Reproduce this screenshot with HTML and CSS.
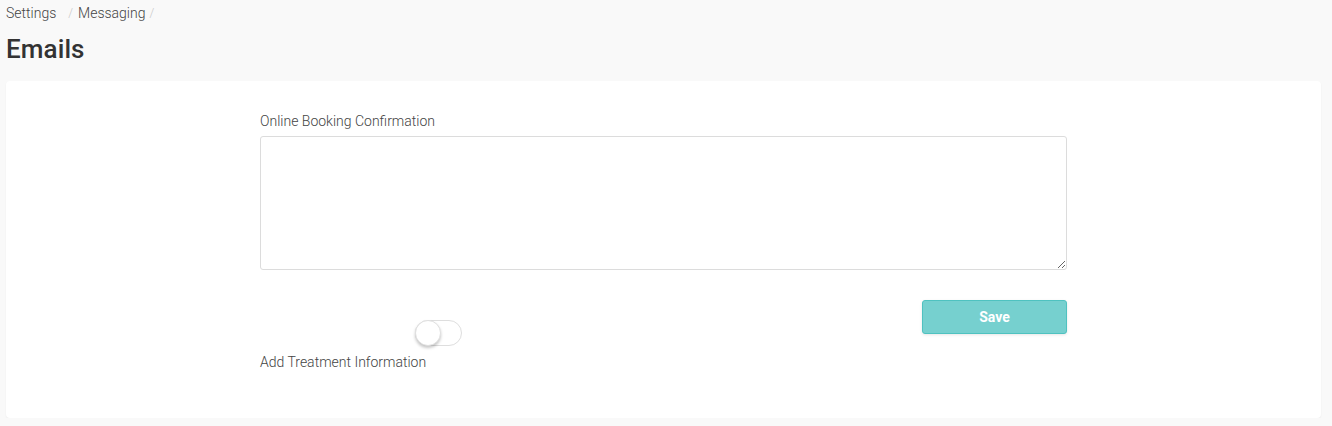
FILE: index.html
```html
<!DOCTYPE html>
<html>
<head>
<meta charset="utf-8">
<link rel="stylesheet" href="styles.css">
</head>
<body>
<div class="page">
  <nav class="crumbs">
    <span class="crumb">Settings</span>
    <span class="sep sep-first">/</span>
    <span class="crumb">Messaging</span>
    <span class="sep">/</span>
  </nav>
  <h1 class="title">Emails</h1>
  <section class="card">
    <div class="column">
      <label class="field-label">Online Booking Confirmation</label>
      <textarea class="field-textarea"></textarea>
      <div class="actions">
        <div class="toggle-group">
          <div class="toggle-row">
            <span class="toggle"><span class="knob"></span></span>
          </div>
          <span class="toggle-label">Add Treatment Information</span>
        </div>
        <button class="save">Save</button>
      </div>
    </div>
  </section>
</div>
</body>
</html>
```
FILE: styles.css
```css
* { box-sizing: border-box; }
html, body {
  margin: 0;
  padding: 0;
  background: #f9f9f9;
  font-family: Roboto, "Liberation Sans", sans-serif;
  color: #555;
}
.page {
  padding: 0 11px 0 6px;
}
.crumbs {
  display: flex;
  align-items: center;
  height: 26px;
  font-size: 14px;
  font-weight: 300;
  line-height: 26px;
  color: #444;
}
.crumb { color: #444; }
.sep {
  color: #c8c8c8;
  font-size: 12px;
  margin: 0 4px 0 4px;
}
.sep-first { margin-left: 12px; margin-right: 5px; }
.title {
  margin: 8px 0 0 0;
  font-size: 26px;
  font-weight: 500;
  letter-spacing: 0.1px;
  line-height: 30px;
  color: #333;
  height: 47px;
}
.card {
  background: #fff;
  border-radius: 4px;
  box-shadow: 0 1px 2px rgba(0,0,0,0.06);
  height: 337px;
  padding-top: 31px;
}
.column {
  width: 807px;
  margin: 0 auto;
  display: flex;
  flex-direction: column;
}
.field-label {
  font-size: 14px;
  font-weight: 300;
  line-height: 18px;
  color: #444;
  margin-bottom: 6px;
}
.field-textarea {
  width: 807px;
  height: 134px;
  border: 1px solid #dcdcdc;
  border-radius: 3px;
  padding: 6px 10px;
  font-family: inherit;
  font-size: 13px;
  resize: vertical;
  outline: none;
  background: #fff;
}
.actions {
  display: flex;
  justify-content: space-between;
  align-items: flex-start;
  margin-top: 30px;
}
.toggle-group {
  display: flex;
  flex-direction: column;
}
.toggle-row {
  padding-left: 155px;
  padding-top: 20px;
  height: 53px;
}
.toggle {
  display: block;
  position: relative;
  width: 47px;
  height: 26px;
  border: 1px solid #dedede;
  border-radius: 13px;
  background: #fff;
}
.knob {
  position: absolute;
  left: -1px;
  top: -1px;
  width: 26px;
  height: 26px;
  border-radius: 50%;
  background: #fff;
  border: 1px solid #e0e0e0;
  box-shadow: 0 2px 3px rgba(0,0,0,0.22);
}
.toggle-label {
  font-size: 14px;
  font-weight: 300;
  line-height: 18px;
  color: #444;
}
.save {
  width: 145px;
  height: 34px;
  background: #76d0cf;
  border: 1px solid #4fc2c0;
  border-radius: 3px;
  color: #fff;
  font-family: inherit;
  font-weight: 700;
  font-size: 14px;
  box-shadow: 0 1px 3px rgba(0,0,0,0.1);
  padding: 0;
}
```
